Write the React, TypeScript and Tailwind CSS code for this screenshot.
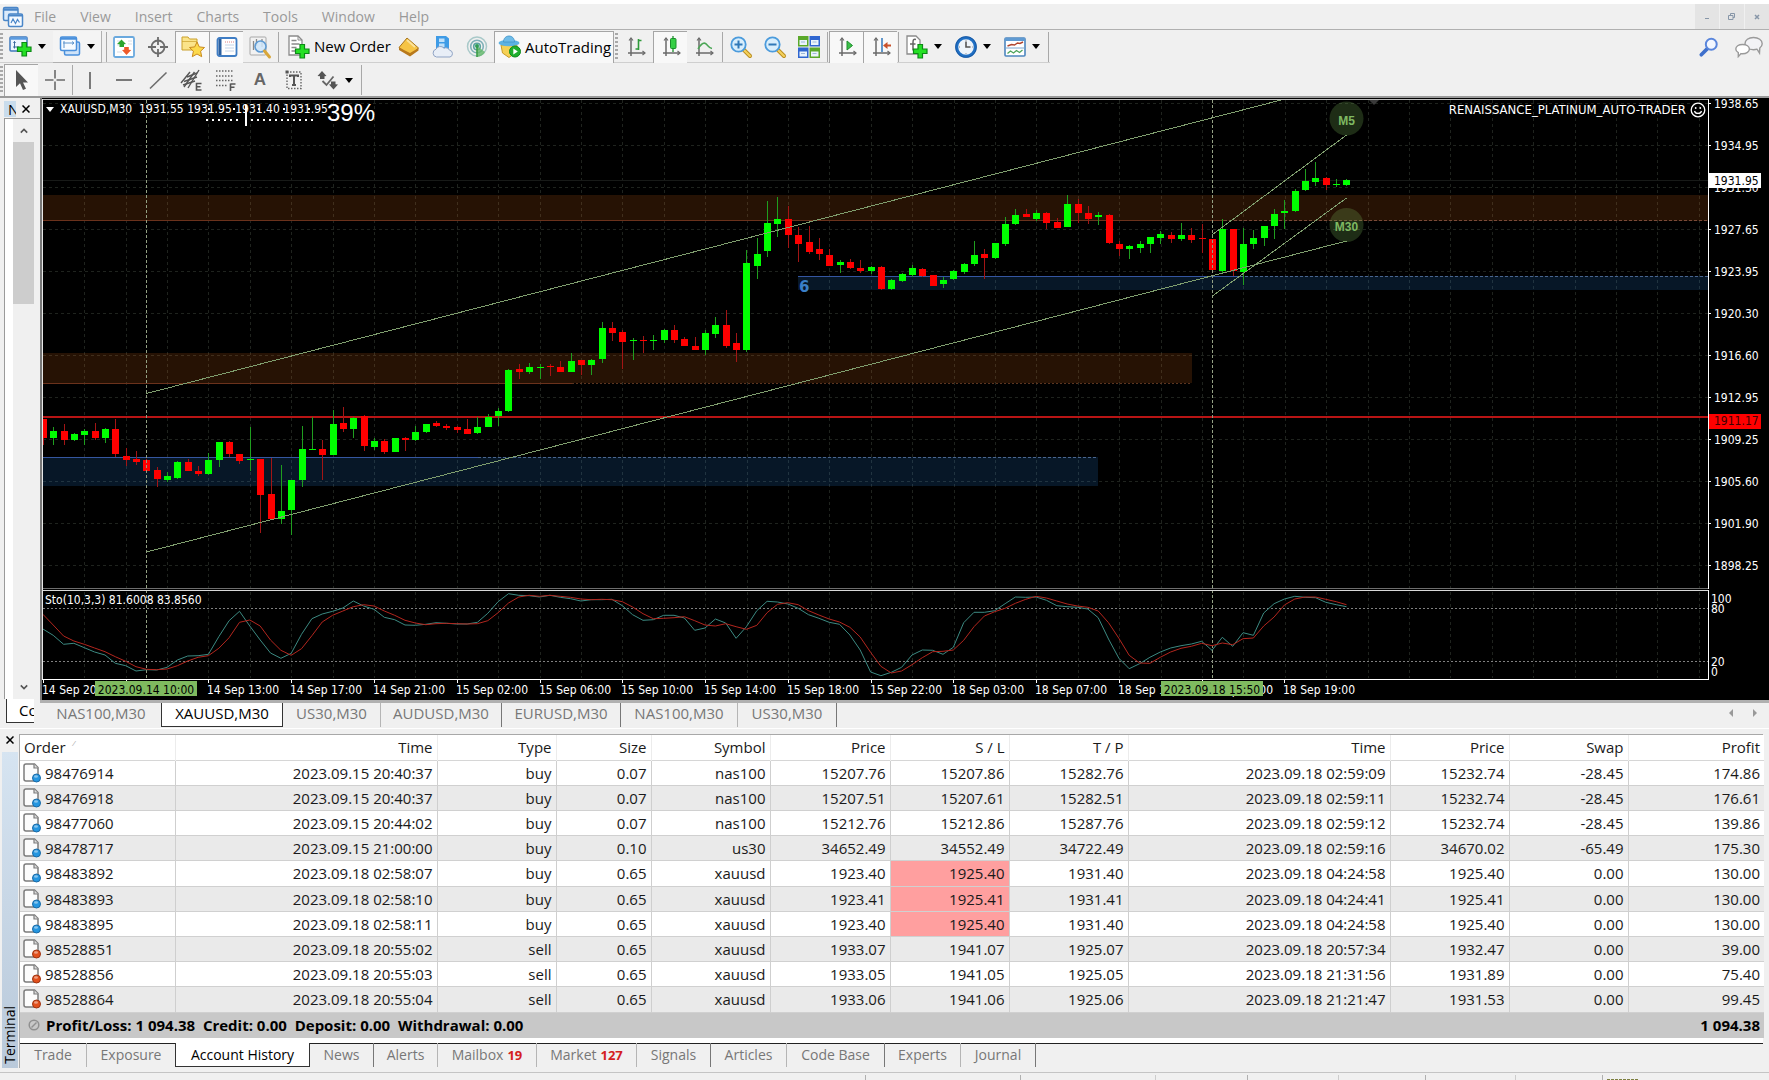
import React from "react";

/* ------------------------------------------------------------------ */
/* Toolbar icons                                                       */
/* ------------------------------------------------------------------ */

function Svg({ children, size = "size-[22px]" }: { children: React.ReactNode; size?: string }) {
  return (
    <svg viewBox="0 0 22 22" className={`${size} shrink-0 overflow-visible`} fill="none" aria-hidden="true">
      {children}
    </svg>
  );
}

const Plus = ({ x = 0, y = 0 }: { x?: number; y?: number }) => (
  <path
    transform={`translate(${x} ${y})`}
    d="M4.500 .5h4.500v4.500h4.500v4.500H9v4.500H4.500V9.500H0V5h4.500z"
    fill="#25e025"
    stroke="#0c8a16"
    strokeWidth="1.200"
  />
);

const Axes = () => (
  <g stroke="#6a6a6a" strokeWidth="1.500">
    <path d="M6 2v18M3 17h17" />
    <path d="M4 4.500 6 2l2 2.500M17.500 15l2.500 2-2.500 2" strokeWidth="1.200" />
  </g>
);

const LogoIcon = () => (
  <Svg>
    <rect x="1.500" y="1.500" width="14.500" height="13" rx="1.500" fill="#dcebfb" stroke="#4a86c8" strokeWidth="1.500" />
    <path d="M1.500 3.500h14.500" stroke="#4a86c8" strokeWidth="2.500" />
    <rect x="6.500" y="8" width="14" height="12.500" rx="1.500" fill="#f4f9ff" stroke="#4a86c8" strokeWidth="1.500" />
    <path d="M6.500 9.500h14" stroke="#4a86c8" strokeWidth="2" />
    <path d="m9 17 2-4 2.500 4.500 2-4 2 3" stroke="#4a86c8" strokeWidth="1.200" />
  </Svg>
);

const NewChartIcon = () => (
  <Svg>
    <rect x="0" y="1" width="17" height="14" rx="1" fill="#eef6ff" stroke="#3f78ba" strokeWidth="1.500" />
    <path d="M0 2.500h17" stroke="#5b9be0" strokeWidth="2.500" />
    <path d="M4.500 5.500v7M3 11h6M3.500 7l1-1.500 1 1.500" stroke="#3c6a9e" />
    <Plus x={7.5} y={6} />
  </Svg>
);

const ProfilesIcon = () => (
  <Svg>
    <rect x="5.500" y="7" width="15" height="13" rx="1.500" fill="#cfe3f8" stroke="#4a90dc" strokeWidth="1.500" />
    <rect x="1.500" y="2" width="16" height="13.500" rx="1.500" fill="#f6fbff" stroke="#4a90dc" strokeWidth="1.500" />
    <path d="M1.500 3.500h16" stroke="#4a90dc" strokeWidth="2.500" />
    <path d="M5 6v7M4 8h11M13 6.500 15 8l-2 1.500" stroke="#5b93cc" />
  </Svg>
);

const MarketIcon = () => (
  <Svg>
    <rect x="1" y="1" width="20" height="20" rx="1.500" fill="#fff" stroke="#6aa9de" strokeWidth="1.800" />
    <path d="M4 5h3M4 9h2M15 8h4M4 16h5M15 5h4" stroke="#d5dde6" />
    <path d="m8.500 3.500 4.500 4.500-2 .2V11H6.500V8.200L4 8z" fill="#2ba52f" />
    <path d="m13.500 19-4.500-5 2.200-.2V11h4.600v2.800l2.400.2z" fill="#ee5a2a" />
  </Svg>
);

const CrosshairCircleIcon = () => (
  <Svg>
    <circle cx="11" cy="11" r="6.500" stroke="#6c6c6c" strokeWidth="1.800" />
    <path d="M11 1v8M11 13v8M1 11h8M13 11h8" stroke="#6c6c6c" strokeWidth="1.800" />
  </Svg>
);

const FolderStarIcon = () => (
  <Svg>
    <path d="M0 1h6l1.500 2H15v11H0z" fill="#fbe48a" stroke="#caa02c" />
    <path d="M0 5.500h15" stroke="#caa02c" strokeWidth=".7" />
    <path
      d="m15 6 2.300 4.900 5.200.6-3.900 3.700 1.100 5.500-4.700-2.700-4.700 2.700 1.100-5.500-3.900-3.700 5.200-.6z"
      fill="#fcd94c"
      stroke="#c98a1d"
    />
  </Svg>
);

const TerminalIcon = () => (
  <Svg>
    <rect x="1.500" y="2" width="19" height="18" rx="2" fill="#fff" stroke="#3f7dc4" strokeWidth="1.800" />
    <path d="M4 3v16" stroke="#2b5f9e" strokeWidth="3" />
    <path d="M9 6h9" stroke="#e08080" strokeDasharray="1 1" />
    <path d="M9 9h9M9 12h9M9 15h9" stroke="#c4d4e8" />
  </Svg>
);

const TesterIcon = () => (
  <Svg>
    <rect x="1" y="1" width="16" height="18" rx="1" fill="#f2f2f2" stroke="#a8a8a8" />
    <path d="M4.500 5v9M7.500 3v7M13 3v8" stroke="#8a8a8a" strokeWidth="1.300" />
    <circle cx="11.500" cy="10.500" r="5.500" fill="#cfe6fa" fillOpacity=".85" stroke="#5f9bd3" strokeWidth="1.600" />
    <path d="m15.500 15 5 6" stroke="#d8a63a" strokeWidth="3" strokeLinecap="round" />
  </Svg>
);

const NewOrderIcon = () => (
  <Svg>
    <path d="M1 0h9l4 4v15H1z" fill="#fff" stroke="#8a8a8a" strokeWidth="1.300" />
    <path d="M10 0v4h4" stroke="#8a8a8a" />
    <path d="M3.500 4.500h5M3.500 8h8M3.500 11.500h5M3.500 15h4" stroke="#8a8a8a" strokeWidth="1.500" />
    <Plus x={7.5} y={8} />
  </Svg>
);

const GoldIcon = () => (
  <Svg>
    <path d="M9 2 20.500 12 12 19.500 1 11.500z" fill="#f6c445" stroke="#a8741a" />
    <path d="m1 11.500 11 5.500 8.500-5v2.500L12 20.500 1 14z" fill="#b8791c" />
    <path d="M9 4 17 11" stroke="#fbe29a" strokeWidth="2" />
  </Svg>
);

const CloudServerIcon = () => (
  <Svg>
    <path d="M4 0h10l3 2.500V13H4z" fill="#3e9be6" />
    <path d="M7 2.500h5.500V6H7zM7 7.500h5.500V11H7z" fill="#bfe0fa" />
    <path
      d="M4.500 21a4 4 0 0 1-.5-7.800 4.800 4.800 0 0 1 8-1 4 4 0 0 1 5.500 2A3.500 3.500 0 0 1 18 21z"
      fill="#e8eef7"
      stroke="#8fa3c4"
    />
  </Svg>
);

const SignalsIcon = () => (
  <Svg>
    <circle cx="11" cy="10.500" r="9.500" stroke="#a9c9c9" strokeWidth="1.500" />
    <circle cx="11" cy="10.500" r="6.300" stroke="#7fb0b8" strokeWidth="1.600" />
    <circle cx="11" cy="10.500" r="3.300" stroke="#5ba3a0" strokeWidth="1.600" />
    <path d="M11 10v11a10 10 0 0 0 8-5z" fill="#62b868" fillOpacity=".8" />
    <path d="M11 10v11" stroke="#3d9c47" strokeWidth="1.600" />
    <circle cx="11" cy="10" r="2" fill="#2f9c57" />
  </Svg>
);

const AutoTradingIcon = () => (
  <Svg>
    <path d="M2 9h16l-2 8-6 4.500L3.500 17z" fill="#f6d155" stroke="#c79a28" />
    <ellipse cx="10" cy="7" rx="10.500" ry="3.300" fill="#5db2e2" />
    <path d="M4.500 6C4.500-2 15.500-2 15.500 6z" fill="#6fbce8" stroke="#3f93c8" strokeWidth=".8" />
    <circle cx="16" cy="15.500" r="5.500" fill="#1fae2d" stroke="#0f8a1e" />
    <path d="m14.300 12.500 4.500 3-4.500 3z" fill="#fff" />
  </Svg>
);

const BarChartIcon = () => (
  <Svg>
    <Axes />
    <path d="M13.500 3v11M10.500 13h3M13.500 4.500h3" stroke="#2f9a3b" strokeWidth="1.600" />
  </Svg>
);
const CandleIcon = () => (
  <Svg>
    <Axes />
    <path d="M13 0v16" stroke="#1a8f2a" strokeWidth="1.300" />
    <rect x="10.500" y="2.500" width="5.500" height="10" rx="1" fill="#35cf45" stroke="#1a8f2a" />
  </Svg>
);
const LineChartIcon = () => (
  <Svg>
    <Axes />
    <path d="M5 13C8 8 10 6 12.500 7.500S15.500 12 19 12.500" stroke="#4ba656" strokeWidth="1.500" />
  </Svg>
);

const ZoomIcon = ({ plus = false }: { plus?: boolean }) => (
  <Svg>
    <path d="m14 14 6 6" stroke="#b98b1c" strokeWidth="4" strokeLinecap="round" />
    <path d="m14.500 14.500 5.500 5.500" stroke="#f3d05c" strokeWidth="2.200" strokeLinecap="round" />
    <circle cx="8.500" cy="8.500" r="7.200" fill="#d8eefc" stroke="#4b9bdc" strokeWidth="1.800" />
    <path d="M4.500 8.500h8" stroke="#3079b8" strokeWidth="2" />
    {plus && <path d="M8.500 4.500v8" stroke="#3079b8" strokeWidth="2" />}
  </Svg>
);

const TileIcon = () => (
  <Svg>
    <rect x="0" y="0" width="10.500" height="10.500" fill="#5aa82a" />
    <rect x="11.500" y="0" width="10.500" height="10.500" fill="#2f66d0" />
    <rect x="0" y="11.500" width="10.500" height="10.500" fill="#2f66d0" />
    <rect x="11.500" y="11.500" width="10.500" height="10.500" fill="#5aa82a" />
    <path d="M1.500 4h7.500v5H1.500zM13 4h7.500v5H13zM1.500 15.500h7.500v5H1.500zM13 15.500h7.500v5H13z" fill="#eaf3fb" />
    <path d="M3 6h4M14.500 6h4M3 17.500h4M14.500 17.500h4" stroke="#9db8d8" />
  </Svg>
);

const AutoScrollIcon = () => (
  <Svg>
    <Axes />
    <path d="m11 5 5.500 4.500L11 14z" fill="#3bbf48" stroke="#1e8e2c" />
  </Svg>
);
const ShiftIcon = () => (
  <Svg>
    <Axes />
    <path d="M12 2v14" stroke="#3c7fc0" strokeWidth="1.600" />
    <path d="m13 9.500 4.500-3.500v2.500H21v2h-3.500V13z" fill="#c8502a" />
  </Svg>
);

const IndicatorsIcon = () => (
  <Svg>
    <path d="M1 0h9l4 4v14H1z" fill="#fff" stroke="#8a8a8a" strokeWidth="1.300" />
    <path d="M10 3.500C7.500 2.800 7 4 7 6.500v8M4 8h5.500" stroke="#666" strokeWidth="1.500" />
    <Plus x={7.5} y={8} />
  </Svg>
);
const ClockIcon = () => (
  <Svg>
    <circle cx="11" cy="11" r="9.300" fill="#eef4fa" stroke="#1f6fc4" strokeWidth="3" />
    <circle cx="11" cy="11" r="10.400" stroke="#174f94" strokeWidth=".7" />
    <path d="M11 5.500V11h4.500" stroke="#555" strokeWidth="1.600" />
    <path d="M11 3.800v1M11 17.200v1M4 11h1M17.200 11h1" stroke="#888" />
  </Svg>
);
const TemplateIcon = () => (
  <Svg>
    <rect x="1" y="2" width="20" height="18" rx="1" fill="#fff" stroke="#4d86bf" strokeWidth="1.600" />
    <path d="M1 3.500h20" stroke="#5f9ad2" strokeWidth="3" />
    <path d="M1 12h20" stroke="#7aa6d0" />
    <path d="m3.500 10 4-1.500 3 .5 3-2 2.500.500 3-1.500" stroke="#b0452f" strokeWidth="1.400" />
    <path d="m3.500 17.500 3-2.500 3 2 3-2.500 3 2 3-2.500" stroke="#4fa35a" strokeWidth="1.300" />
  </Svg>
);

const SearchIcon = () => (
  <Svg size="size-[20px]">
    <path d="m2.500 19.500 7-7" stroke="#3f70cc" strokeWidth="4" strokeLinecap="round" />
    <circle cx="13.500" cy="8" r="6" fill="#f3f7ff" stroke="#5a86dc" strokeWidth="2.200" />
  </Svg>
);
const ChatIcon = () => (
  <svg viewBox="0 0 28 22" className="h-[22px] w-[28px] shrink-0" fill="none" aria-hidden="true">
    <path
      d="M18.500 1.500c-5 0-8.500 2.600-8.500 6.200 0 3.500 3.500 6 8.500 6 1.300 0 2.500-.200 3.500-.500l2.500 3.800.3-5c1.500-1.200 2.400-2.600 2.400-4.300 0-3.600-3.700-6.200-8.700-6.200z"
      fill="#f3f3f6"
      stroke="#9a9a9a"
      strokeWidth="1.400"
    />
    <path
      d="M7.500 8.500C3.500 8.500.8 10.400.8 13c0 1.500 1 2.800 2.500 3.600v4l2.700-3c.5.1 1 .1 1.500.1 4 0 6.900-2.100 6.900-4.700s-2.900-4.500-6.900-4.500z"
      fill="#fff"
      stroke="#9a9a9a"
      strokeWidth="1.400"
    />
  </svg>
);

/* Drawing toolbar */
const CursorIcon = () => (
  <Svg>
    <path d="M5 0v17l4-3.700 3 6.700 3-1.300-3-6.200h5z" fill="#555" />
  </Svg>
);
const CrossIcon = () => (
  <Svg>
    <path d="M11 1v8.500M11 12.500V21M1 11h8.500M12.500 11H21" stroke="#6a6a6a" strokeWidth="1.600" />
  </Svg>
);
const VLineIcon = () => (
  <Svg>
    <path d="M11 3v17" stroke="#5c5c5c" strokeWidth="1.600" />
  </Svg>
);
const HLineIcon = () => (
  <Svg>
    <path d="M3 11h16" stroke="#5c5c5c" strokeWidth="1.600" />
  </Svg>
);
const TrendIcon = () => (
  <Svg>
    <path d="M3 19.500 19.500 3.500" stroke="#6c6c6c" strokeWidth="1.600" />
  </Svg>
);
const ChannelIcon = () => (
  <Svg>
    <path d="m0 14 9-11M3 18 13.500 3M7 19 18 1" stroke="#555" strokeWidth="1.400" />
    <path d="M3 12.500 16 8M2 16l12-4M6 8l10-4" stroke="#555" strokeWidth="1.400" />
    <path d="M20.500 14.500h-5v6.500h5M15.500 17.700h4" stroke="#555" strokeWidth="1.600" />
  </Svg>
);
const FiboIcon = () => (
  <Svg>
    <path d="M1 2h18M1 7h18M1 11.500h18M1 16.500h12" stroke="#666" strokeWidth="1.500" strokeDasharray="1.500 1.500" />
    <path d="M20.500 15h-5M15.500 14.500V22M15.500 18.200h4" stroke="#555" strokeWidth="1.600" />
  </Svg>
);
const LabelIcon = () => (
  <Svg>
    <rect x="4" y="3" width="14" height="16.500" stroke="#666" strokeWidth="1.400" strokeDasharray="1.500 1.500" />
    <rect x="2.500" y="1.500" width="3" height="3" fill="#555" />
    <path d="M7 8V6.500h8V8M11 6.500V16M9 16h4" stroke="#555" strokeWidth="2" />
  </Svg>
);
const ArrowsIcon = () => (
  <Svg>
    <path d="m5 2 4.500 5-2 .3V10H3V7.300L.5 7zM16.500 20.500l-4.500-5 2-.3V12.500h4.500v2.700l2.500.3z" fill="#555" />
    <path d="m5.500 12 4 4L16.500 7.500" stroke="#666" strokeWidth="1.800" />
  </Svg>
);

/* ------------------------------------------------------------------ */
/* Toolbar building blocks                                             */
/* ------------------------------------------------------------------ */

function Caret() {
  return <span className="h-0 w-0 border-x-4 border-t-[5px] border-x-transparent border-t-black" />;
}

function Tool({ label, pressed = false, children }: { label: string; pressed?: boolean; children: React.ReactNode }) {
  return (
    <button
      aria-label={label}
      className={
        pressed
          ? "flex h-8 w-[34px] items-center justify-center border-l border-t border-[#a5a5a5] bg-[#f8f8f8]"
          : "flex h-8 w-[34px] items-center justify-center"
      }
    >
      {children}
    </button>
  );
}

function DropTool({ label, raised = false, children }: { label: string; raised?: boolean; children: React.ReactNode }) {
  return (
    <button
      aria-label={label}
      className={
        raised
          ? "flex h-8 w-[49px] items-center gap-1.5 border-b border-r border-[#b0b0b0] bg-[#f4f4f4] pl-1.5"
          : "flex h-8 w-[49px] items-center gap-1.5 pl-1.5"
      }
    >
      {children}
      <Caret />
    </button>
  );
}

const Grip = () => <span className="mr-px h-7 w-[3px] bg-[repeating-linear-gradient(#a8a8a8_0_2px,#f0f0f0_2px_4px)]" />;
const Sep = () => <span className="mx-px h-[30px] w-px bg-[#a8a8a8]" />;

const MENU = ["File", "View", "Insert", "Charts", "Tools", "Window", "Help"];

function MenuBar() {
  return (
    <header className="flex h-[30px] items-stretch border-b border-t-4 border-b-[#b0b0b0] border-t-white">
      <div className="flex items-center pl-0.5">
        <LogoIcon />
      </div>
      <nav className="flex items-center gap-6 pl-2.5 text-[14px] text-[#999]">
        {MENU.map((m) => (
          <button key={m}>{m}</button>
        ))}
      </nav>
      <div className="ml-auto flex gap-px text-[#8796a8]">
        <button aria-label="Minimize" className="flex w-6 items-center justify-center bg-[#e4e4e4]">
          <span className="mt-1 h-px w-1 bg-[#8796a8]" />
        </button>
        <button aria-label="Restore" className="flex w-6 items-center justify-center bg-[#e4e4e4]">
          <svg viewBox="0 0 8 8" className="size-2" fill="none" stroke="currentColor">
            <path d="M2.500 2V.500h4v4H5M.500 2.500h4.500v4H.500z" />
          </svg>
        </button>
        <button aria-label="Close" className="flex w-6 items-center justify-center bg-[#e4e4e4]">
          <svg viewBox="0 0 8 8" className="size-2" fill="none" stroke="currentColor" strokeWidth="1.500">
            <path d="m2 2 4 4M6 2 2 6" />
          </svg>
        </button>
      </div>
    </header>
  );
}

function Toolbars() {
  return (
    <div className="border-b-2 border-[#9a9a9a]">
      <div className="flex h-[34px] items-center">
        <div className="flex h-8 items-center border-b border-[#cfcfcf]">
          <Grip />
          <DropTool label="New chart"><NewChartIcon /></DropTool>
          <DropTool label="Profiles" raised><ProfilesIcon /></DropTool>
          <span className="ml-1 h-[30px] w-px bg-[#a8a8a8]" />
          <Tool label="Market watch"><MarketIcon /></Tool>
          <Tool label="Data window"><CrosshairCircleIcon /></Tool>
          <Tool label="Navigator" pressed><FolderStarIcon /></Tool>
          <Tool label="Terminal" pressed><TerminalIcon /></Tool>
          <Tool label="Strategy tester"><TesterIcon /></Tool>
          <Sep />
          <button className="flex h-8 w-[112px] items-center gap-1 whitespace-nowrap pl-2 text-[15px] text-black">
            <NewOrderIcon />
            New Order
          </button>
          <Tool label="MetaEditor"><GoldIcon /></Tool>
          <Tool label="VPS"><CloudServerIcon /></Tool>
          <Tool label="Signals"><SignalsIcon /></Tool>
          <button className="flex h-8 w-[120px] items-center gap-1 whitespace-nowrap border-x border-t border-[#a5a5a5] bg-[#f8f8f8] pl-1 text-[15px] text-black">
            <AutoTradingIcon />
            AutoTrading
          </button>
          <span className="w-px" />
          <Grip />
          <Tool label="Bar chart"><BarChartIcon /></Tool>
          <Tool label="Candlesticks" pressed><CandleIcon /></Tool>
          <Tool label="Line chart"><LineChartIcon /></Tool>
          <Sep />
          <Tool label="Zoom in"><ZoomIcon plus /></Tool>
          <Tool label="Zoom out"><ZoomIcon /></Tool>
          <Tool label="Tile windows"><TileIcon /></Tool>
          <Sep />
          <Tool label="Auto scroll" pressed><AutoScrollIcon /></Tool>
          <Tool label="Chart shift" pressed><ShiftIcon /></Tool>
          <Sep />
          <DropTool label="Indicators"><IndicatorsIcon /></DropTool>
          <DropTool label="Periods"><ClockIcon /></DropTool>
          <DropTool label="Templates"><TemplateIcon /></DropTool>
          <Sep />
        </div>
        <div className="ml-auto flex items-center gap-4 pr-1.5">
          <button aria-label="Search"><SearchIcon /></button>
          <button aria-label="Chat"><ChatIcon /></button>
        </div>
      </div>
      <div className="flex h-8 items-center">
        <Grip />
        <Tool label="Cursor" pressed><CursorIcon /></Tool>
        <Tool label="Crosshair"><CrossIcon /></Tool>
        <span className="h-[30px] w-px bg-[#a8a8a8]" />
        <Tool label="Vertical line"><VLineIcon /></Tool>
        <Tool label="Horizontal line"><HLineIcon /></Tool>
        <Tool label="Trendline"><TrendIcon /></Tool>
        <Tool label="Channel"><ChannelIcon /></Tool>
        <Tool label="Fibonacci"><FiboIcon /></Tool>
        <Tool label="Text">
          <span className="font-['Liberation_Sans',sans-serif] text-[17px] font-bold text-[#666]">A</span>
        </Tool>
        <Tool label="Text label"><LabelIcon /></Tool>
        <DropTool label="Arrows"><ArrowsIcon /></DropTool>
        <Sep />
      </div>
    </div>
  );
}

/* ------------------------------------------------------------------ */
/* Chart data: [rising, high, body top, body bottom, low]              */
/* Values are thirds of a pixel below the top of each price segment.   */
/* ------------------------------------------------------------------ */

type Row = [number, number, number, number, number];

const SEGMENTS: { top: number; rows: Row[] }[] = [
  {
    top: 380,
    rows: [
      [0, 117, 117, 174, 194], [1, 140, 153, 174, 194], [0, 132, 153, 179, 196], [1, 158, 163, 179, 182],
      [1, 148, 153, 164, 194], [0, 130, 153, 174, 179], [1, 145, 147, 174, 190], [0, 116, 148, 222, 230],
      [0, 203, 227, 240, 257], [0, 212, 237, 245, 256], [0, 237, 240, 272, 272], [0, 262, 269, 297, 320],
      [1, 277, 288, 300, 307], [1, 243, 247, 293, 296], [0, 237, 247, 272, 272], [0, 258, 273, 282, 288],
      [1, 218, 240, 282, 285], [1, 186, 186, 240, 261], [0, 184, 186, 222, 230], [0, 222, 222, 242, 251],
      [1, 142, 236, 240, 273], [0, 236, 237, 345, 458], [0, 235, 342, 416, 416], [1, 256, 392, 417, 431],
      [1, 300, 300, 390, 465], [1, 137, 208, 300, 322], [1, 110, 207, 210, 210], [0, 180, 207, 224, 299],
      [1, 90, 132, 224, 224], [0, 80, 130, 146, 156], [1, 112, 113, 146, 173], [0, 106, 108, 198, 212],
      [1, 173, 183, 200, 211], [0, 176, 183, 216, 221], [1, 174, 175, 215, 215], [0, 170, 174, 180, 213],
      [1, 138, 156, 179, 182], [1, 131, 132, 156, 158], [0, 123, 129, 139, 141], [0, 132, 137, 143, 149],
      [0, 137, 141, 149, 158], [0, 116, 147, 161, 161], [1, 112, 141, 159, 162], [1, 102, 112, 142, 142],
      [1, 84, 94, 109, 139],
    ],
  },
  {
    top: 180,
    rows: [
      [1, 566, 569, 693, 696], [0, 552, 567, 576, 597], [1, 549, 561, 577, 582], [1, 552, 561, 564, 597],
      [0, 552, 558, 561, 588], [0, 544, 560, 576, 576], [1, 518, 543, 576, 576], [0, 540, 540, 555, 584],
      [1, 538, 539, 555, 585], [1, 426, 444, 538, 548], [0, 427, 444, 459, 484], [0, 450, 457, 486, 567],
      [1, 474, 479, 484, 539], [0, 469, 480, 483, 518], [1, 465, 479, 483, 511], [1, 448, 450, 480, 488],
      [0, 436, 450, 480, 488], [0, 472, 477, 498, 498], [0, 471, 498, 511, 511], [1, 450, 459, 511, 524],
      [1, 411, 435, 461, 473], [0, 390, 434, 498, 504], [0, 459, 489, 511, 547], [1, 211, 249, 511, 516],
      [1, 175, 222, 258, 296], [1, 64, 129, 214, 230], [1, 52, 117, 132, 171], [0, 79, 117, 166, 203],
      [0, 141, 165, 191, 246], [0, 139, 186, 216, 222], [0, 175, 207, 222, 239], [0, 208, 224, 258, 258],
      [1, 239, 246, 254, 278], [0, 238, 247, 264, 266], [0, 241, 263, 273, 279], [1, 258, 261, 273, 281],
      [0, 259, 261, 327, 330], [1, 297, 300, 327, 329], [1, 278, 281, 303, 307], [1, 256, 264, 285, 290],
      [0, 265, 267, 289, 292], [0, 284, 285, 318, 318],
    ],
  },
  {
    top: 100,
    rows: [
      [1, 530, 540, 552, 565], [1, 510, 513, 538, 541], [1, 489, 492, 516, 521], [1, 424, 465, 492, 497],
      [0, 447, 461, 473, 537], [1, 428, 430, 474, 476], [1, 351, 372, 431, 438], [1, 327, 345, 373, 376],
      [0, 326, 342, 350, 350], [1, 331, 339, 356, 362], [0, 337, 340, 369, 386], [0, 354, 366, 383, 383],
      [1, 285, 312, 380, 382], [0, 297, 311, 340, 370], [0, 319, 338, 357, 371], [1, 336, 345, 351, 374],
      [0, 342, 345, 429, 431], [0, 422, 432, 447, 467], [1, 435, 438, 447, 476], [1, 422, 432, 444, 459],
      [1, 410, 411, 432, 459], [1, 393, 402, 414, 432], [0, 395, 405, 417, 429], [1, 369, 405, 416, 423],
      [0, 384, 405, 420, 429], [0, 372, 413, 416, 459], [0, 416, 416, 511, 516], [1, 357, 387, 514, 518],
      [0, 388, 388, 514, 529], [1, 384, 432, 516, 555], [1, 390, 414, 432, 448], [1, 377, 379, 415, 437],
      [1, 328, 342, 378, 417], [1, 300, 333, 339, 386], [1, 267, 272, 333, 336], [1, 207, 243, 270, 273],
      [1, 187, 234, 246, 257], [0, 231, 234, 256, 270], [1, 237, 252, 255, 261], [1, 238, 240, 255, 257],
    ],
  },
];

const CANDLES = SEGMENTS.flatMap(({ top, rows }) =>
  rows.map(([up, ...ys]) => ({ up: up === 1, ys: ys.map((v) => Math.round(top + v / 3)) })),
);

const MAIN = [
  177, 196, 223, 220, 233, 246, 255, 280, 287, 303, 299, 300, 292, 270, 258, 257, 253, 200, 152, 124, 168, 210, 249,
  265, 250, 193, 146, 132, 124, 114, 93, 108, 118, 142, 149, 165, 166, 163, 158, 160, 162, 162, 157, 130, 95, 71, 76,
  77, 81, 76, 82, 86, 93, 89, 89, 88, 107, 134, 151, 149, 136, 136, 144, 181, 174, 147, 159, 205, 170, 122, 94, 96,
  102, 115, 134, 145, 157, 163, 195, 240, 306, 317, 307, 292, 255, 240, 241, 253, 232, 158, 127, 127, 122, 101, 81,
  82, 81, 91, 107, 110, 112, 117, 143, 207, 265, 296, 281, 262, 246, 234, 227, 222, 214, 241, 202, 229, 188, 196,
  129, 101, 87, 79, 82, 83, 97, 104, 110,
];

const SIGNAL = [
  133, 165, 198, 213, 223, 234, 245, 260, 274, 290, 298, 299, 297, 287, 273, 262, 257, 235, 203, 157, 150, 168, 210,
  241, 256, 236, 197, 156, 136, 123, 110, 104, 108, 123, 136, 151, 159, 164, 161, 160, 161, 162, 161, 152, 128, 99,
  81, 76, 79, 76, 79, 82, 87, 89, 88, 89, 95, 111, 131, 146, 145, 143, 140, 152, 165, 168, 161, 170, 178, 166, 128,
  103, 98, 104, 122, 135, 147, 156, 172, 201, 247, 289, 309, 303, 284, 263, 245, 244, 240, 211, 170, 138, 125, 115,
  100, 88, 79, 84, 93, 102, 108, 112, 123, 158, 205, 256, 279, 280, 262, 246, 235, 229, 220, 227, 219, 224, 206, 204,
  168, 141, 105, 87, 81, 81, 88, 95, 104,
];

const barX = (k: number) => 42.9 + 10.346 * k;
const linePoints = (vals: number[]) => vals.map((v, k) => `${barX(k).toFixed(1)},${(570 + v / 3).toFixed(1)}`).join(" ");

const GRID_X = Array.from({ length: 60 }, (_, i) => Math.round(84.3 + 41.395 * i) + 0.5);
const GRID_Y = Array.from({ length: 12 }, (_, i) => 103.5 + 42 * i);

const TIMES = [
  "14 Sep 2023", "", "14 Sep 13:00", "14 Sep 17:00", "14 Sep 21:00", "15 Sep 02:00", "15 Sep 06:00", "15 Sep 10:00",
  "15 Sep 14:00", "15 Sep 18:00", "15 Sep 22:00", "18 Sep 03:00", "18 Sep 07:00", "18 Sep 11:00", "18 Sep 15:00",
  "18 Sep 19:00",
];

const PRICES = [
  "1938.65", "1934.95", "1931.30", "1927.65", "1923.95", "1920.30", "1916.60", "1912.95", "1909.25", "1905.60",
  "1901.90", "1898.25",
];

function Plot() {
  return (
    <svg className="h-[602px] w-full" shapeRendering="crispEdges" fill="none" role="img" aria-label="XAUUSD M30 chart">
      <g transform="translate(-42 -98)">
        {/* grid */}
        <g stroke="#1f231e" strokeDasharray="3 3">
          {GRID_X.map((x) => (
            <path key={x} d={`M${x} 100V588M${x} 592V678`} />
          ))}
          {GRID_Y.map((y) => (
            <line key={y} x1="43" x2="110%" y1={y} y2={y} />
          ))}
        </g>
        <rect x="43" y="180" width="100%" height="1" fill="#181a18" />

        {/* supply and demand zones */}
        <rect x="43" y="195" width="100%" height="26" fill="#ff7a1c" fillOpacity=".15" />
        <path d="M43 220.500H1224" stroke="#6b321c" />
        <line x1="1224" x2="110%" y1="220.500" y2="220.500" stroke="#7a4a38" strokeDasharray="3 2" />
        <rect x="43" y="353" width="1149" height="30" fill="#ff7a1c" fillOpacity=".15" />
        <path d="M43 383.500H572" stroke="#6b321c" />
        <path d="M572 383.500H1191" stroke="#5c3520" strokeDasharray="2 2" />
        <rect x="798" y="276" width="100%" height="14" fill="#2a8cf0" fillOpacity=".16" />
        <path d="M798 276.500H1240" stroke="#3556a0" />
        <line x1="1240" x2="110%" y1="276.500" y2="276.500" stroke="#4a6690" strokeDasharray="3 2" />
        <rect x="43" y="457" width="1055" height="29" fill="#2a8cf0" fillOpacity=".16" />
        <path d="M43 457.500H478" stroke="#3556a0" />
        <path d="M478 457.500H1098" stroke="#4a6690" strokeDasharray="3 2" />
        <rect x="43" y="416" width="100%" height="2" fill="#b81414" />

        {/* candles */}
        {CANDLES.map(({ up, ys: [high, top, bottom, low] }, k) => {
          const x = Math.round(barX(k));
          return (
            <g key={k}>
              <rect x={x} y={high} width="1" height={Math.max(1, low - high)} fill={up ? "#1f9e1f" : "#a31515"} />
              <rect x={x - 3} y={top} width="7" height={Math.max(1, bottom - top)} fill={up ? "#00ff00" : "#ff0000"} />
            </g>
          );
        })}

        {/* channels */}
        <g stroke="#7f9e6e">
          <path d="M146.500 393.500 1285 99M146.500 552 1346.500 241M1212.500 234.500 1346.500 135M1212.500 296 1346.500 198" />
        </g>
        <path d="M146.500 100V678M1212.500 100V678" stroke="#93a184" strokeDasharray="3 2" />

        <g shapeRendering="auto" fontFamily="'Liberation Sans', sans-serif" fontWeight="bold" fontSize="12" textAnchor="middle">
          <circle cx="1346.500" cy="118.500" r="17" fill="#76b456" fillOpacity=".25" />
          <circle cx="1346.500" cy="225" r="17" fill="#76b456" fillOpacity=".25" />
          <text x="1346.500" y="125" fill="#7fb862">M5</text>
          <text x="1346.500" y="231" fill="#7fb862">M30</text>
        </g>
        <path d="M1368 99h12l-6 6z" fill="#3a3a3a" shapeRendering="auto" />
        <text x="799" y="292" fontFamily="'DejaVu Sans', sans-serif" fontWeight="bold" fontSize="15" fill="#3a7fc8">6</text>

        {/* loading gauge */}
        <path d="M206 120H242M251 120H314" stroke="#fff" strokeWidth="2" strokeDasharray="2 4" />
        <path d="M208 109H314" stroke="#fff" strokeWidth="2" strokeDasharray="2 23" />
        <rect x="245" y="105" width="2" height="21" fill="#fff" />
        <text x="327" y="121" fontFamily="'Liberation Sans', sans-serif" fontSize="24" fill="#fff">39%</text>

        {/* stochastic */}
        <g stroke="#808080">
          <line x1="43" x2="110%" y1="608.500" y2="608.500" strokeDasharray="2 2" />
          <line x1="43" x2="110%" y1="661.500" y2="661.500" strokeDasharray="2 2" />
        </g>
        <g shapeRendering="auto">
          <polyline points={linePoints(MAIN)} stroke="#3c8a82" />
          <polyline points={linePoints(SIGNAL)} stroke="#b3261e" />
        </g>

        {/* frames */}
        <rect x="42" y="588" width="110%" height="1" fill="#6e6e6e" />
        <rect x="42" y="590" width="110%" height="1" fill="#d8d8d8" />
        <rect x="42" y="679" width="110%" height="1" fill="#fff" />
        <rect x="42" y="99" width="110%" height="1" fill="#bdbdbd" />
        <rect x="42" y="99" width="1" height="580" fill="#e8e8e8" />

        {/* time scale */}
        <g fontSize="12" fill="#fff" shapeRendering="auto">
          {TIMES.map((t, i) => {
            const x = Math.round(42.9 + 82.77 * i);
            return (
              <g key={i}>
                <rect x={x} y="679" width="1" height="4" fill="#fff" />
                <text x={x - 1} y="694">{t}</text>
              </g>
            );
          })}
          <rect x="95" y="681" width="102" height="15" fill="#7fba5f" />
          <text x="146" y="694" textAnchor="middle" fill="#000">2023.09.14 10:00</text>
          <rect x="1161" y="681" width="102" height="15" fill="#7fba5f" />
          <text x="1212" y="694" textAnchor="middle" fill="#000">2023.09.18 15:50</text>
        </g>
      </g>
    </svg>
  );
}

function PriceAxis() {
  return (
    <svg className="h-[602px] w-[61px] shrink-0" fontSize="12" fill="#fff" role="img" aria-label="Price scale">
      <g transform="translate(0 -98)">
        <rect x="0" y="99" width="1" height="490" />
        <rect x="0" y="590" width="1" height="90" />
        {PRICES.map((p, i) => (
          <g key={p}>
            <rect x="0" y={103 + 42 * i} width="3" height="1" />
            <text x="6" y={108 + 42 * i}>{p}</text>
          </g>
        ))}
        <rect x="1" y="173" width="52" height="15" />
        <text x="6" y="185" fill="#000">1931.95</text>
        <rect x="1" y="414" width="52" height="15" fill="#ff0000" />
        <text x="6" y="425" fill="#400000">1911.17</text>
        <text x="3" y="603">100</text>
        <text x="3" y="613">80</text>
        <text x="3" y="666">20</text>
        <text x="3" y="676">0</text>
      </g>
    </svg>
  );
}

function Chart() {
  return (
    <div className="relative flex border-l-2 border-[#777] bg-black font-['DejaVu_Sans_Condensed','Noto_Sans',sans-serif] text-white">
      <div className="relative min-w-0 flex-1 overflow-hidden">
        <Plot />
        <div className="absolute left-1 top-[3px] flex items-center gap-1.5 whitespace-pre text-[12px] leading-4">
          <span className="border-x-4 border-t-[5px] border-x-transparent border-t-white" />
          <span>{"XAUUSD,M30  1931.55 1931.95 1931.40 1931.95"}</span>
        </div>
        <div className="absolute right-0.5 top-1 flex items-center gap-1 text-[13px] leading-4">
          <span>RENAISSANCE_PLATINUM_AUTO-TRADER</span>
          <svg viewBox="0 0 16 16" className="size-4" fill="none" stroke="#fff">
            <circle cx="8" cy="8" r="6.800" strokeWidth="1.300" />
            <path d="M4.500 9c.8 3.200 6.200 3.200 7 0" strokeWidth="1.200" />
            <circle cx="5.700" cy="6" r=".9" fill="#fff" stroke="none" />
            <circle cx="10.300" cy="6" r=".9" fill="#fff" stroke="none" />
          </svg>
        </div>
        <span className="absolute left-[3px] top-[494px] text-[12px] leading-4">Sto(10,3,3) 81.6008 83.8560</span>
      </div>
      <PriceAxis />
    </div>
  );
}

/* ------------------------------------------------------------------ */
/* Navigator strip and chart tabs                                      */
/* ------------------------------------------------------------------ */

function Navigator() {
  return (
    <aside className="flex w-10 shrink-0 flex-col pl-1 pt-0.5">
      <div className="flex h-[18px] items-center justify-between pr-2.5 text-[15px] leading-4">
        <span className="w-3 overflow-hidden bg-[#c9dcec] pl-1">N</span>
        <button aria-label="Close navigator">
          <svg viewBox="0 0 8 8" className="size-2" stroke="#000" strokeWidth="1.500"><path d="m.500.500 7 7M7.500.500l-7 7" /></svg>
        </button>
      </div>
      <div className="flex flex-1 border-l border-t border-[#9a9a9a]">
        <div className="w-2 bg-white" />
        <div className="flex w-[21px] flex-col items-center justify-between bg-[#f0f0f0]">
          <button aria-label="Scroll up" className="flex h-[23px] items-center">
            <svg viewBox="0 0 10 6" className="h-1.5 w-2" fill="none" stroke="#555" strokeWidth="2"><path d="m1 5 4-4 4 4" /></svg>
          </button>
          <div className="h-[162px] w-full bg-[#cdcdcd]" />
          <span className="flex-1" />
          <button aria-label="Scroll down" className="flex h-6 items-center">
            <svg viewBox="0 0 10 6" className="h-1.5 w-2" fill="none" stroke="#555" strokeWidth="2"><path d="m1 1 4 4 4-4" /></svg>
          </button>
        </div>
      </div>
      <div className="mb-[5px] ml-0.5 mr-1.5 h-6 overflow-hidden border-b border-l border-[#333] bg-white pl-3 text-[15px] leading-[22px]">
        Common
      </div>
    </aside>
  );
}

const CHART_TABS = [
  { label: "NAS100,M30", cls: "w-[120px]" },
  { label: "XAUUSD,M30", cls: "w-[122px] border border-t-0 border-[#333] bg-white text-black" },
  { label: "US30,M30", cls: "w-[98px] border-r border-[#b5b5b5] text-[#777]" },
  { label: "AUDUSD,M30", cls: "w-[121px] border-r border-[#777] text-[#777]" },
  { label: "EURUSD,M30", cls: "w-[119px] border-r border-[#777] text-[#777]" },
  { label: "NAS100,M30", cls: "w-[117px] border-r border-[#b5b5b5] text-[#777]" },
  { label: "US30,M30", cls: "w-[99px] border-r border-[#777] text-[#777]" },
];

function ChartTabs() {
  return (
    <div className="flex h-7 items-start border-t-[3px] border-[#b0b0b0] pl-px text-[#777]">
      {CHART_TABS.map((t, i) => (
        <button key={i} className={`flex h-6 items-start justify-center text-[15px] leading-5 ${t.cls}`}>
          {t.label}
        </button>
      ))}
      <div className="ml-auto flex h-5 items-center gap-5 pr-3">
        <button aria-label="Previous tabs" className="border-y-4 border-r-4 border-y-transparent border-r-[#999]" />
        <button aria-label="Next tabs" className="border-y-4 border-l-4 border-y-transparent border-l-[#999]" />
      </div>
    </div>
  );
}

/* ------------------------------------------------------------------ */
/* Terminal                                                            */
/* ------------------------------------------------------------------ */

const COLUMNS = ["Order", "Time", "Type", "Size", "Symbol", "Price", "S / L", "T / P", "Time", "Price", "Swap", "Profit"];

const COL_WIDTHS = [
  "w-[155px]", "w-[262px]", "w-[119px]", "w-[95px]", "w-[119px]", "w-[120px]", "w-[119px]", "w-[119px]", "w-[262px]",
  "w-[119px]", "w-[119px]", "w-[136px]",
];

const ORDERS: string[][] = [
  ["98476914", "2023.09.15 20:40:37", "buy", "0.07", "nas100", "15207.76", "15207.86", "15282.76", "2023.09.18 02:59:09", "15232.74", "-28.45", "174.86"],
  ["98476918", "2023.09.15 20:40:37", "buy", "0.07", "nas100", "15207.51", "15207.61", "15282.51", "2023.09.18 02:59:11", "15232.74", "-28.45", "176.61"],
  ["98477060", "2023.09.15 20:44:02", "buy", "0.07", "nas100", "15212.76", "15212.86", "15287.76", "2023.09.18 02:59:12", "15232.74", "-28.45", "139.86"],
  ["98478717", "2023.09.15 21:00:00", "buy", "0.10", "us30", "34652.49", "34552.49", "34722.49", "2023.09.18 02:59:16", "34670.02", "-65.49", "175.30"],
  ["98483892", "2023.09.18 02:58:07", "buy", "0.65", "xauusd", "1923.40", "1925.40", "1931.40", "2023.09.18 04:24:58", "1925.40", "0.00", "130.00"],
  ["98483893", "2023.09.18 02:58:10", "buy", "0.65", "xauusd", "1923.41", "1925.41", "1931.41", "2023.09.18 04:24:41", "1925.41", "0.00", "130.00"],
  ["98483895", "2023.09.18 02:58:11", "buy", "0.65", "xauusd", "1923.40", "1925.40", "1931.40", "2023.09.18 04:24:58", "1925.40", "0.00", "130.00"],
  ["98528851", "2023.09.18 20:55:02", "sell", "0.65", "xauusd", "1933.07", "1941.07", "1925.07", "2023.09.18 20:57:34", "1932.47", "0.00", "39.00"],
  ["98528856", "2023.09.18 20:55:03", "sell", "0.65", "xauusd", "1933.05", "1941.05", "1925.05", "2023.09.18 21:31:56", "1931.89", "0.00", "75.40"],
  ["98528864", "2023.09.18 20:55:04", "sell", "0.65", "xauusd", "1933.06", "1941.06", "1925.06", "2023.09.18 21:21:47", "1931.53", "0.00", "99.45"],
];

function OrderIcon({ sell }: { sell: boolean }) {
  return (
    <svg viewBox="0 0 18 20" className="h-5 w-[18px] shrink-0" fill="none" aria-hidden="true">
      <path d="M3 1h8.500L15 4.500V18H3Q1 18 1 16V3Q1 1 3 1z" fill="#fcfcfc" stroke="#7c7c7c" strokeWidth="1.500" />
      <path d="M11 1v4h4" fill="#ddd" stroke="#7c7c7c" strokeWidth="1.200" />
      <circle cx="13.500" cy="15" r="4" fill={sell ? "#e2501c" : "#2596e0"} stroke={sell ? "#9c3412" : "#1a6aa6"} />
      <ellipse cx="13" cy="13.500" rx="2" ry="1.200" fill="#fff" fillOpacity=".45" />
    </svg>
  );
}

function HistoryTable() {
  return (
    <table className="w-full table-fixed border-collapse bg-white text-right text-[15px] leading-6 text-[#1a1a1a]">
      <colgroup>
        {COL_WIDTHS.map((w, i) => (
          <col key={i} className={w} />
        ))}
      </colgroup>
      <thead>
        <tr className="h-[25px] border-b border-[#d6d6d6]">
          {COLUMNS.map((c, i) => (
            <th
              key={i}
              className={
                i === 0
                  ? "border-r border-[#ececec] py-0 pl-1 text-left font-normal"
                  : "border-r border-[#ececec] py-0 pr-1 font-normal last:border-r-0"
              }
            >
              {c}
              {i === 0 && <span className="ml-2 align-top text-[8px] leading-4 text-[#999]">⁄</span>}
            </th>
          ))}
        </tr>
      </thead>
      <tbody>
        {ORDERS.map((row) => (
          <tr key={row[0]} className="h-[25px] border-b border-[#d0d0d0] even:bg-[#eaeaea] nth-[5n]:h-[26px]">
            {row.map((cell, i) => {
              if (i === 0)
                return (
                  <td key={i} className="border-r border-[#cfcfcf] py-0">
                    <span className="flex items-center gap-1 pl-[3px]">
                      <OrderIcon sell={row[2] === "sell"} />
                      {cell}
                    </span>
                  </td>
                );
              const hit = i === 6 && row[0].startsWith("98483");
              return (
                <td
                  key={i}
                  className={
                    hit
                      ? "border-r border-[#cfcfcf] bg-[#ff9f9f] py-0 pr-1"
                      : "border-r border-[#cfcfcf] py-0 pr-1 last:border-r-0"
                  }
                >
                  {cell}
                </td>
              );
            })}
          </tr>
        ))}
      </tbody>
      <tfoot>
        <tr className="h-[26px] bg-[#c8c8c8] font-bold text-black">
          <td colSpan={11} className="py-0">
            <span className="flex items-center gap-1.5 whitespace-pre pl-2">
              <svg viewBox="0 0 12 12" className="size-3" fill="none" stroke="#909090" strokeWidth="1.500" aria-hidden="true">
                <circle cx="6" cy="6" r="4.800" />
                <path d="m3.500 8.500 5-5" />
              </svg>
              {"Profit/Loss: 1 094.38  Credit: 0.00  Deposit: 0.00  Withdrawal: 0.00"}
            </span>
          </td>
          <td className="py-0 pr-1">1 094.38</td>
        </tr>
      </tfoot>
    </table>
  );
}

const TERMINAL_TABS = [
  { label: "Trade", cls: "w-[67px] border-r border-[#b5b5b5] text-[#777]" },
  { label: "Exposure", cls: "w-[88px] text-[#777]" },
  { label: "Account History", cls: "w-[135px] border border-t-0 border-[#333] bg-white text-black" },
  { label: "News", cls: "w-[64px] border-r border-[#777] text-[#777]" },
  { label: "Alerts", cls: "w-[64px] border-r border-[#b5b5b5] text-[#777]" },
  { label: "Mailbox", count: "19", cls: "w-[99px] border-r border-[#b5b5b5] text-[#777]" },
  { label: "Market", count: "127", cls: "w-[100px] border-r border-[#b5b5b5] text-[#777]" },
  { label: "Signals", cls: "w-[74px] border-r border-[#777] text-[#777]" },
  { label: "Articles", cls: "w-[76px] border-r border-[#b5b5b5] text-[#777]" },
  { label: "Code Base", cls: "w-[98px] border-r border-[#777] text-[#777]" },
  { label: "Experts", cls: "w-[76px] border-r border-[#b5b5b5] text-[#777]" },
  { label: "Journal", cls: "w-[75px] border-r border-[#777] text-[#777]" },
];

function Terminal() {
  return (
    <section className="flex pr-1.5">
      <div className="flex w-[19px] shrink-0 flex-col items-center">
        <button aria-label="Close terminal" className="flex h-3 items-center">
          <svg viewBox="0 0 8 8" className="size-2" stroke="#000" strokeWidth="1.500"><path d="m.500.500 7 7M7.500.500l-7 7" /></svg>
        </button>
        <div className="mt-1.5 flex w-4 flex-1 items-center justify-start bg-gradient-to-b from-[#d6e4f1] to-[#b9c9da] pb-1 [writing-mode:sideways-lr]">
          <span className="text-[14px] leading-4 text-black">Terminal</span>
        </div>
      </div>
      <div className="min-w-0 flex-1 border-l border-t border-[#a8a8a8]">
        <HistoryTable />
        <div className="h-[5px] bg-white" />
        <div className="flex h-[25px] border-t border-[#222]">
          {TERMINAL_TABS.map((t) => (
            <button key={t.label} className={`-mt-px h-6 whitespace-nowrap text-[14px] leading-6 ${t.cls}`}>
              {t.label}
              {t.count && <span className="ml-1 text-[13px] font-bold text-[#d42020]">{t.count}</span>}
            </button>
          ))}
        </div>
      </div>
    </section>
  );
}

function StatusBar() {
  return (
    <footer className="mt-1 flex h-2 justify-end border-t border-[#c4c4c4]">
      <span className="mt-0.5 w-[155px] border-l border-[#b0b0b0]" />
      <span className="mt-0.5 w-[135px] border-l border-[#b0b0b0]" />
      <span className="mt-0.5 w-[92px] border-l border-[#ccc]" />
      <span className="mt-0.5 w-[91px] border-l border-[#b0b0b0]" />
      <span className="mt-0.5 w-[87px] border-l border-[#ccc]" />
      <span className="mt-0.5 w-[90px] border-l border-[#b0b0b0]" />
      <span className="mt-0.5 w-[87px] border-l border-[#ccc]" />
      <span className="mt-0.5 flex w-[167px] items-end border-l border-[#b0b0b0] pl-1">
        <span className="h-px w-8 bg-[repeating-linear-gradient(90deg,#7d8040_0_3px,#f0f0f0_3px_4px)]" />
      </span>
    </footer>
  );
}

export default function App() {
  return (
    <div className="flex min-h-screen flex-col overflow-hidden bg-[#f0f0f0] font-['Open_Sans','Noto_Sans',sans-serif]">
      <MenuBar />
      <Toolbars />
      <main className="flex">
        <Navigator />
        <div className="min-w-0 flex-1">
          <Chart />
          <ChartTabs />
        </div>
      </main>
      <div className="mb-[5px] border-t border-white" />
      <Terminal />
      <StatusBar />
    </div>
  );
}
